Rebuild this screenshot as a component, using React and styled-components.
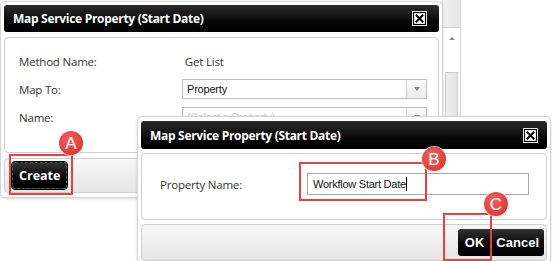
import React from "react";
import styled, { createGlobalStyle } from "styled-components";

const Global = createGlobalStyle`
  html, body { margin: 0; padding: 0; background: #fff; }
  body { width: 554px; height: 261px; overflow: hidden; font-family: "Open Sans", "Noto Sans", sans-serif; }
`;

const Stage = styled.div`
  position: relative;
  width: 554px;
  height: 261px;
  background: #fff;
  overflow: hidden;
`;

const Window = styled.div`
  position: absolute;
  left: ${(p) => p.$x}px;
  top: ${(p) => p.$y}px;
  width: ${(p) => p.$w}px;
  height: ${(p) => p.$h}px;
  box-sizing: border-box;
  display: flex;
  flex-direction: column;
  gap: ${(p) => p.$gap}px;
  padding: ${(p) => p.$pad};
  background: #fff;
  border: 1px solid #d4d4d4;
  border-radius: 5px;
  box-shadow: 0 1px 3px rgba(0, 0, 0, 0.15);
`;

const TitleBar = styled.div`
  height: ${(p) => p.$h}px;
  flex: none;
  display: flex;
  align-items: center;
  justify-content: space-between;
  padding: 0 ${(p) => p.$pr}px 0 9px;
  background: linear-gradient(#2c2c2c, #080808 60%, #000);
  border-radius: 3px;
  color: #fff;
  font-family: "Open Sans", "Noto Sans", sans-serif;
  font-weight: 700;
  font-size: 12px;
  letter-spacing: -0.3px;
`;

const Panel = styled.div`
  flex: ${(p) => (p.$grow ? 1 : "none")};
  height: ${(p) => (p.$h ? `${p.$h}px` : "auto")};
  box-sizing: border-box;
  border: 1px solid #cfcfcf;
  border-radius: 4px;
  background: ${(p) => (p.$footer ? "linear-gradient(#f7f7f7, #e6e6e6)" : "#fff")};
`;

const Form = styled.div`
  display: grid;
  grid-template-columns: ${(p) => p.$cols};
  row-gap: 8px;
  align-items: center;
  padding: ${(p) => p.$pad};
  font-family: "Open Sans", "Noto Sans", sans-serif;
  font-size: 11.5px;
  color: #333;
  letter-spacing: -0.2px;
`;

const Cell = styled.div`
  height: 20px;
  display: flex;
  align-items: center;
`;

const Select = styled.div`
  height: 20px;
  width: 245px;
  box-sizing: border-box;
  display: flex;
  border: 1px solid #bdbdbd;
  background: #fff;
  font-family: "Liberation Sans", Arial, sans-serif;
  font-size: 11px;
  color: ${(p) => (p.$muted ? "#c8c8c8" : "#111")};
`;

const SelectText = styled.div`
  flex: 1;
  display: flex;
  align-items: center;
  padding-left: 4px;
`;

const SelectBtn = styled.div`
  width: 19px;
  border-left: 1px solid #d0d0d0;
  background: linear-gradient(#fbfbfb, #ececec);
  display: flex;
  align-items: center;
  justify-content: center;
  &::after {
    content: "";
    border-left: 3.5px solid transparent;
    border-right: 3.5px solid transparent;
    border-top: 4px solid #8a8a8a;
  }
`;

const TextInput = styled.div`
  height: 22px;
  width: 222px;
  box-sizing: border-box;
  border: 1px solid #a8a8a8;
  display: flex;
  align-items: center;
  padding-left: 5px;
  font-family: "Liberation Sans", Arial, sans-serif;
  font-size: 11px;
  letter-spacing: -0.25px;
  color: #111;
`;

const Caret = styled.span`
  display: inline-block;
  width: 1px;
  height: 14px;
  background: #000;
`;

const Footer = styled(Panel)`
  display: flex;
  align-items: center;
  justify-content: ${(p) => (p.$end ? "flex-end" : "flex-start")};
  padding: 0 ${(p) => (p.$end ? 2 : 0)}px 0 ${(p) => (p.$end ? 0 : 7)}px;
`;

const BlackBtn = styled.div`
  height: ${(p) => p.$h}px;
  display: flex;
  align-items: center;
  padding: 0 ${(p) => p.$px}px;
  background: linear-gradient(#333, #0c0c0c 50%, #000);
  color: #fff;
  font-family: ${(p) => p.$font};
  font-weight: 700;
  font-size: ${(p) => p.$fs}px;
  border-radius: ${(p) => p.$r};
  box-sizing: border-box;
  border: ${(p) => (p.$focus ? "1px dashed #3f6a3f" : "none")};
  outline: ${(p) => (p.$focus ? "1px solid #000" : "none")};
`;

const BtnGroup = styled.div`
  display: flex;
  border-radius: 4px;
  overflow: hidden;
  background: #000;
`;

const Scrollbar = styled.div`
  position: absolute;
  left: 442px;
  top: 0;
  width: 19px;
  height: 130px;
  box-sizing: border-box;
  border-left: 1px solid #d6d6d6;
  border-right: 1px solid #d6d6d6;
  display: flex;
  flex-direction: column;
  background: #fff;
`;

const ScrollCap = styled.div`
  height: 27px;
  background: linear-gradient(90deg, #f2f2f2, #e6e6e6);
  border-bottom: 1px solid #cfcfcf;
`;

const ScrollArrow = styled.div`
  height: 44px;
  display: flex;
  justify-content: center;
  padding-top: 9px;
  box-sizing: border-box;
  &::after {
    content: "";
    width: 0;
    height: 0;
    border-left: 3.5px solid transparent;
    border-right: 3.5px solid transparent;
    border-bottom: 3.5px solid #888;
  }
`;

const ScrollThumb = styled.div`
  flex: 1;
  margin: 0 2px;
  background: linear-gradient(90deg, #eeeeee, #e2e2e2);
  border: 1px solid #cdcdcd;
`;

const Highlight = styled.div`
  position: absolute;
  left: ${(p) => p.$x}px;
  top: ${(p) => p.$y}px;
  width: ${(p) => p.$w}px;
  height: ${(p) => p.$h}px;
  box-sizing: border-box;
  border: 2px solid #e8423f;
`;

const Badge = styled.div`
  position: absolute;
  left: ${(p) => p.$cx - 12}px;
  top: ${(p) => p.$cy - 12}px;
  width: 24px;
  height: 24px;
  border-radius: 50%;
  background: radial-gradient(circle at 40% 35%, #f0605a, #e03c37 70%);
  box-shadow: 0 0 0 1px rgba(255, 255, 255, 0.8), 0 1px 2px rgba(0, 0, 0, 0.25);
  color: #fff;
  display: flex;
  align-items: center;
  justify-content: center;
  font-family: "Liberation Sans", Arial, sans-serif;
  font-size: 17px;
  line-height: 1;
`;

const CloseIcon = () => (
  <svg width="15" height="15" viewBox="0 0 15 15">
    <rect x="0" y="0" width="15" height="15" fill="#fff" />
    <rect x="1.5" y="1.5" width="12" height="12" fill="none" stroke="#000" strokeWidth="1.2" />
    <path d="M3.8 3.8 L11.2 11.2 M11.2 3.8 L3.8 11.2" stroke="#000" strokeWidth="2" />
  </svg>
);

const TITLE = "Map Service Property (Start Date)";
const SANS = '"Open Sans", "Noto Sans", sans-serif';
const ARIAL = '"Liberation Sans", Arial, sans-serif';

export default function App() {
  return (
    <Stage>
      <Global />
      <Scrollbar>
        <ScrollCap />
        <ScrollArrow />
        <ScrollThumb />
      </Scrollbar>

      <Window $x={0} $y={1} $w={443} $h={197} $gap={5} $pad="3px 3px 4px 3px">
        <TitleBar $h={27} $pr={12}>
          <span>{TITLE}</span>
          <CloseIcon />
        </TitleBar>
        <Panel $grow>
          <Form $cols="163px 1fr" $pad="13px 0 0 14px">
            <Cell>Method Name:</Cell>
            <Cell>&nbsp;Get List</Cell>
            <Cell>Map To:</Cell>
            <Select>
              <SelectText>Property</SelectText>
              <SelectBtn />
            </Select>
            <Cell>Name:</Cell>
            <Select $muted>
              <SelectText>(Select a Property)</SelectText>
              <SelectBtn />
            </Select>
          </Form>
        </Panel>
        <Footer $h={35} $footer>
          <BlackBtn $h={27} $px={6} $fs={12.5} $r="3px" $focus $font={SANS}>
            Create
          </BlackBtn>
        </Footer>
      </Window>

      <Window $x={137} $y={116} $w={414} $h={150} $gap={4} $pad="4px 3px 4px 3px">
        <TitleBar $h={28} $pr={9}>
          <span>{TITLE}</span>
          <CloseIcon />
        </TitleBar>
        <Panel $h={67}>
          <Form $cols="147px 1fr" $pad="19px 0 0 18px">
            <Cell>Property Name:</Cell>
            <TextInput>
              Workflow Start Date<Caret />
            </TextInput>
          </Form>
        </Panel>
        <Footer $h={37} $footer $end>
          <BtnGroup>
            <BlackBtn $h={27} $px={7} $fs={13} $r="0" $font={ARIAL}>OK</BlackBtn>
            <BlackBtn $h={27} $px={5} $fs={13} $r="0" $font={ARIAL}>Cancel</BlackBtn>
          </BtnGroup>
        </Footer>
      </Window>

      <Highlight $x={9} $y={154} $w={64} $h={41} />
      <Badge $cx={71} $cy={143}>A</Badge>
      <Highlight $x={299} $y={162} $w={128} $h={39} />
      <Badge $cx={434} $cy={159}>B</Badge>
      <Highlight $x={443} $y={213} $w={49} $h={48} />
      <Badge $cx={496} $cy={204}>C</Badge>
    </Stage>
  );
}
